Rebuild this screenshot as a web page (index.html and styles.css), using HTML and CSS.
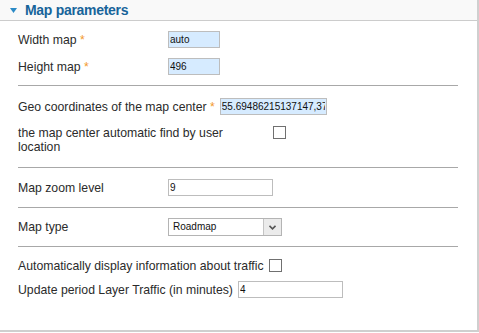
FILE: index.html
```html
<!DOCTYPE html>
<html lang="en">
<head>
    <meta charset="UTF-8">
    <title>Map parameters</title>
    <link rel="stylesheet" href="styles.css">
</head>
<body>
<div class="panel">
    <div class="panel-head">
        <svg class="toggle" width="7" height="5" viewBox="0 0 7 5"><path d="M0 0H7L3.5 5Z" fill="#2b8ac6"/></svg>
        <span>Map parameters</span>
    </div>
    <div class="panel-body">
        <div class="group g1">
            <div class="row">
                <label class="lbl w150">Width map <em>*</em></label>
                <input class="field req small" type="text" value="auto">
            </div>
            <div class="row">
                <label class="lbl w150">Height map <em>*</em></label>
                <input class="field req small" type="text" value="496">
            </div>
        </div>
        <div class="group g2">
            <div class="row">
                <label class="lbl">Geo coordinates of the map center <em>*</em></label>
                <input class="field req geo" type="text" value="55.69486215137147,37.5">
            </div>
            <div class="row top">
                <label class="lbl wrap">the map center automatic find by user location</label>
                <input class="check check-far" type="checkbox">
            </div>
        </div>
        <div class="group g3">
            <div class="row">
                <label class="lbl w150">Map zoom level</label>
                <input class="field wide" type="text" value="9">
            </div>
        </div>
        <div class="group g4">
            <div class="row">
                <label class="lbl w150">Map type</label>
                <div class="selectbox">
                    <span class="sel-text">Roadmap</span>
                    <span class="sel-arrow">
                        <svg width="7" height="5" viewBox="0 0 7 5"><path d="M0.5 0.8L3.5 3.8L6.5 0.8" fill="none" stroke="#555" stroke-width="1.6"/></svg>
                    </span>
                </div>
            </div>
        </div>
        <div class="group g5">
            <div class="row">
                <label class="lbl">Automatically display information about traffic</label>
                <input class="check check-near" type="checkbox">
            </div>
            <div class="row">
                <label class="lbl">Update period Layer Traffic (in minutes)</label>
                <input class="field wide traffic" type="text" value="4">
            </div>
        </div>
    </div>
</div>
</body>
</html>
```

FILE: styles.css
```css
body{
    margin: 0;
    font-family: "Liberation Sans", Arial, sans-serif;
    background: #fff;
}
.panel{
    width: 477px;
    height: 330px;
    border-right: 2px solid #cfcfcf;
    border-bottom: 2px solid #cfcfcf;
}
.panel-head{
    height: 20px;
    background: #f9f9f9;
    border-bottom: 1px solid #cccccc;
    display: flex;
    align-items: center;
    padding-left: 10px;
}
.panel-head span{
    font-size: 14px;
    font-weight: bold;
    color: #17649a;
    margin-left: 8px;
    letter-spacing: -0.3px;
}
.toggle{
    margin-top: 1px;
}
.panel-body{
    width: 440px;
    margin-left: 18px;
}
.group{
    display: flex;
    flex-direction: column;
    gap: 10px;
    padding: 10px 0 10px 0;
    border-bottom: 1px solid #a8a8a8;
}
.g2{
    padding: 12px 0 13px 0;
    gap: 11px;
}
.g3{
    padding: 11px 0 11px 0;
}
.g4{
    padding: 10px 0 10px 0;
}
.g5{
    border-bottom: none;
    padding-top: 10px;
    gap: 7px;
}
.row{
    display: flex;
    align-items: center;
    min-height: 17px;
}
.row.top{
    align-items: flex-start;
}
.lbl{
    font-size: 12.25px;
    color: #2b2b2b;
    line-height: 14px;
}
.lbl em{
    font-style: normal;
    color: #f39a2c;
}
.w150{
    width: 150px;
    flex: none;
}
.wrap{
    width: 230px;
    flex: none;
}
.field{
    box-sizing: border-box;
    height: 17px;
    border: 1px solid #bdbdbd;
    padding: 0 1px;
    margin: 0;
    font-family: "Liberation Sans", Arial, sans-serif;
    font-size: 10px;
    color: #111;
    background: #fff;
    outline: none;
}
.field.req{
    background: #d6ebff;
}
.small{
    width: 52px;
}
.geo{
    width: 107px;
    margin-left: 5px;
}
.wide{
    width: 105px;
}
.traffic{
    margin-left: 5px;
}
.check{
    appearance: none;
    -webkit-appearance: none;
    width: 13px;
    height: 13px;
    margin: 0;
    border: 1px solid #707070;
    background: #fff;
    box-sizing: border-box;
}
.check-far{
    margin-left: 25px;
}
.check-near{
    margin-left: 5px;
}
.selectbox{
    box-sizing: border-box;
    width: 114px;
    height: 18px;
    border: 1px solid #b4b4b4;
    display: flex;
    align-items: stretch;
    background: #fff;
}
.sel-text{
    flex: 1;
    font-size: 10px;
    line-height: 16px;
    padding-left: 4px;
    color: #111;
}
.sel-arrow{
    width: 17px;
    background: #ebebeb;
    border-left: 1px solid #c4c4c4;
    display: flex;
    align-items: center;
    justify-content: center;
}
```
